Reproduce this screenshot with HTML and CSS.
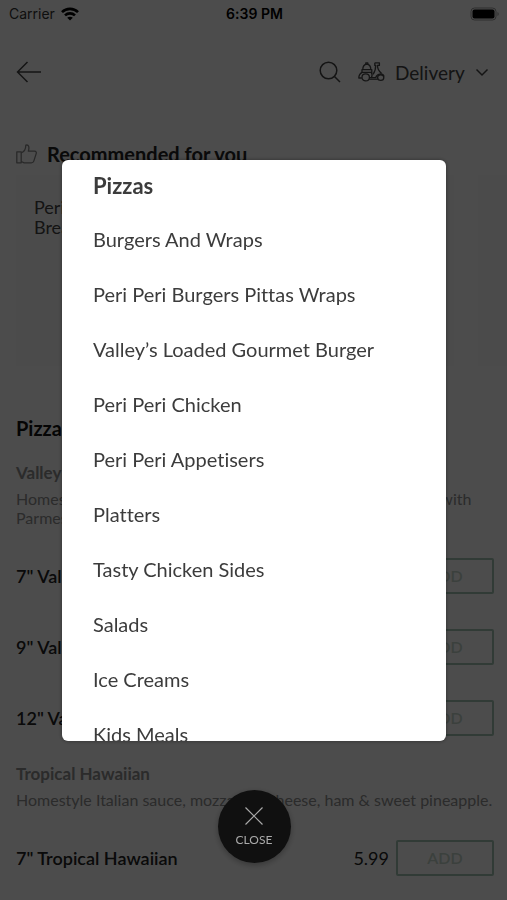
FILE: index.html
```html
<!DOCTYPE html>
<html lang="en">
  <head>
    <meta charset="UTF-8" />
    <meta name="viewport" content="width=device-width, initial-scale=1.0" />
    <title>Menu</title>
    <link rel="stylesheet" href="styles.css">
  </head>
  <body>
    <div class="status-bar">
      <div class="carrier">
        <span>Carrier</span>
        <svg width="18" height="14" viewBox="0 0 18 14" fill="none" stroke="#000" stroke-width="2.6">
          <path d="M1 5.2C5.4.7 12.6.7 17 5.2" />
          <path d="M4 8.4c2.8-2.7 7.2-2.7 10 0" />
          <path d="M9 13.6 6.2 10.7c1.5-1.4 4.1-1.4 5.6 0z" fill="#000" stroke="none" />
        </svg>
      </div>
      <span class="time">6:39 PM</span>
      <svg class="battery" width="30" height="14" viewBox="0 0 30 14">
        <rect x="1" y="1" width="25" height="12" rx="3.5" fill="none" stroke="#999" />
        <rect x="2.5" y="2.5" width="22" height="9" rx="2" />
        <path d="M27.5 5v4c1.6-.6 1.6-3.4 0-4z" fill="#999" />
      </svg>
    </div>

    <header class="header">
      <button class="icon-button" aria-label="Back">
        <svg width="26" height="22" viewBox="0 0 26 22" fill="none" stroke="#444" stroke-width="1.5">
          <path d="M25 11H1.5M11.5 1 1.5 11l10 10" />
        </svg>
      </button>
      <div class="header-actions">
        <button class="icon-button" aria-label="Search">
          <svg width="22" height="22" viewBox="0 0 22 22" fill="none" stroke="#444" stroke-width="1.5">
            <circle cx="9.5" cy="9.5" r="8.3" />
            <path d="m15.5 15.5 5.5 5.5" />
          </svg>
        </button>
        <label class="delivery">
          <svg width="27" height="20" viewBox="0 0 27 20" fill="none" stroke="#484848" stroke-width="1.3" stroke-linejoin="round">
            <path d="M4.8 7.6c0-3.2 1.4-5.2 4-5.6 2.6.4 4 2.4 4 5.6zM4 7.6h9.8v2.8H4z" />
            <path d="M7.8 2V.8h2V2" />
            <path d="M4.2 10.4C2 11.5.8 13.5.8 16h3M13.2 10.4c1.3 1.8 1 3.6.2 5.2h-2" />
            <path d="M4 15.4c0-4.6 7.4-4.6 7.4 0s-7.4 4.6-7.4 0z" />
            <path d="M16.8.8h4.6v2.6h-2c.2 3.6 1.5 6 4.2 8.2M16.8.8v2.6h.8c.2 3.6-.8 6.6-2.6 9" />
            <path d="M13.4 15.6h4.4c.6-3.6 7.4-5.4 8.2-1.2" />
            <path d="M19.6 15.6c0-3.8 6.2-3.8 6.2 0s-6.2 3.8-6.2 0z" />
            <path d="M11.2 17.2h8.6" />
          </svg>
          <select aria-label="Order type">
            <option>Delivery</option>
          </select>
          <svg width="14" height="9" viewBox="0 0 14 9" fill="none" stroke="#444" stroke-width="1.5">
            <path d="m1.5 1.5 5.5 5.5 5.5-5.5" />
          </svg>
        </label>
      </div>
    </header>

    <main class="menu">
      <h2 class="recommended-title">
        <svg width="21" height="20" viewBox="0 0 21 20" fill="none" stroke="#888" stroke-width="1.3" stroke-linejoin="round">
          <path d="M.8 7.8h4.4v11H.8z" />
          <path d="M5.2 8.8C8 7.8 9.8 5.5 9.8 1.2c2.8-1 3.9 1.8 2.5 6h6.2c1.6 0 2.2 1.3 1.6 2.7l-2.3 7.2c-.4 1.2-1.2 1.7-2.5 1.7H8.2L5.2 17.5" />
        </svg>
        Recommended for you
      </h2>
      <div class="cards">
        <div class="card">Peri Peri<br>Bread</div>
        <div class="card"></div>
      </div>

      <h2 class="section-title">Pizzas</h2>
      <section class="item">
        <h3>Valley's</h3>
        <p>Homestyle Italian sauce, mozzarella cheese &amp; bacon, topped with Parmesan.</p>
        <div class="size"><span>7" Valley's</span><span class="price">5.99</span><button class="add">ADD</button></div>
        <div class="size"><span>9" Valley's</span><span class="price">7.99</span><button class="add">ADD</button></div>
        <div class="size"><span>12" Valley's</span><span class="price">9.99</span><button class="add">ADD</button></div>
      </section>
      <section class="item">
        <h3>Tropical Hawaiian</h3>
        <p>Homestyle Italian sauce, mozzarella cheese, ham &amp; sweet pineapple.</p>
        <div class="size"><span>7" Tropical Hawaiian</span><span class="price">5.99</span><button class="add">ADD</button></div>
      </section>
    </main>

    <div class="overlay" id="overlay">
      <nav class="dialog">
        <a href="#" class="active">Pizzas</a>
        <a href="#">Burgers And Wraps</a>
        <a href="#">Peri Peri Burgers Pittas Wraps</a>
        <a href="#">Valley’s Loaded Gourmet Burger</a>
        <a href="#">Peri Peri Chicken</a>
        <a href="#">Peri Peri Appetisers</a>
        <a href="#">Platters</a>
        <a href="#">Tasty Chicken Sides</a>
        <a href="#">Salads</a>
        <a href="#">Ice Creams</a>
        <a href="#">Kids Meals</a>
      </nav>
      <button class="close" id="closeOverlay">
        <svg width="20" height="20" viewBox="0 0 20 20" fill="none" stroke="#aaa" stroke-width="1.2">
          <path d="m1.5 1.5 17 17m0-17-17 17" />
        </svg>
        CLOSE
      </button>
    </div>

    <script>
      document.getElementById("closeOverlay").addEventListener("click", () => {
        document.getElementById("overlay").classList.add("hidden");
      });
    </script>
  </body>
</html>
```
FILE: styles.css
```css
* {
  margin: 0;
  padding: 0;
  box-sizing: border-box;
}
body {
  font-family: Lato, sans-serif;
  font-variant-ligatures: none;
  background: #fff;
  color: #222;
  min-height: 100vh;
}
button {
  font-family: inherit;
  background: none;
  border: none;
  cursor: pointer;
}
svg {
  display: block;
  flex: none;
}
.status-bar {
  display: grid;
  grid-template-columns: 1fr auto 1fr;
  align-items: center;
  height: 27px;
  padding: 0 7px 0 9px;
  font-family: Inter, sans-serif;
  font-size: 14px;
  color: #333;
}
.carrier {
  display: flex;
  align-items: center;
  gap: 6px;
}
.time {
  font-weight: 600;
  color: #000;
}
.battery {
  justify-self: end;
}
.header {
  display: flex;
  align-items: center;
  justify-content: space-between;
  height: 90px;
  padding: 0 18px 0 16px;
}
.header-actions {
  display: flex;
  align-items: center;
  gap: 17px;
}
.delivery {
  display: flex;
  align-items: center;
  gap: 10px;
}
.delivery select {
  appearance: none;
  border: none;
  background: none;
  font-family: inherit;
  font-size: 19px;
  color: #444;
}
.menu {
  padding: 25px 13px 0 16px;
}
.recommended-title,
.section-title {
  display: flex;
  align-items: center;
  gap: 10px;
  font-size: 20px;
  line-height: 24px;
  font-weight: 700;
}
.recommended-title {
  margin-bottom: 9px;
}
.section-title {
  margin-bottom: 21px;
  color: #111;
}
.cards {
  display: grid;
  grid-template-columns: 1fr 16px;
  gap: 24px;
  margin-bottom: 50px;
}
.card {
  min-height: 191px;
  padding: 22px 18px;
  background: #fcfcfc;
  font-size: 18px;
  line-height: 20px;
  color: #444;
  overflow: hidden;
}
.item {
  margin-bottom: 9px;
}
.item h3 {
  margin-bottom: 4px;
  font-size: 17px;
  line-height: 24px;
  font-weight: 700;
  color: #909090;
}
.item p {
  margin-bottom: 13px;
  font-size: 16px;
  line-height: 19px;
  color: #909090;
}
.size {
  display: flex;
  align-items: center;
  gap: 7px;
  height: 71px;
  font-size: 18px;
  font-weight: 600;
}
.price {
  margin-left: auto;
  font-weight: 400;
}
.add {
  width: 98px;
  height: 36px;
  border: 2px solid #a4c6b4;
  border-radius: 2px;
  font-size: 16px;
  font-weight: 600;
  color: #c6d8cc;
}
.overlay {
  position: fixed;
  inset: 0;
  display: flex;
  flex-direction: column;
  align-items: center;
  gap: 49px;
  padding: 160px 61px 37px 62px;
  background: rgba(0, 0, 0, 0.7);
}
.overlay.hidden {
  display: none;
}
.dialog {
  flex: 1;
  min-height: 0;
  width: 100%;
  overflow: hidden;
  border-radius: 6px;
  background: #fff;
  box-shadow: 0 0 4px rgba(0, 0, 0, 0.4);
}
.dialog a {
  display: block;
  padding: 0 31px;
  font-size: 20px;
  line-height: 55px;
  color: #3c3c3c;
  text-decoration: none;
}
.dialog a.active {
  font-size: 22px;
  line-height: 52px;
  font-weight: 700;
}
.close {
  display: flex;
  flex-direction: column;
  align-items: center;
  justify-content: center;
  gap: 6px;
  width: 73px;
  height: 73px;
  border-radius: 50%;
  background: #101010;
  font-size: 12px;
  color: #aaa;
  box-shadow: 0 2px 6px rgba(0, 0, 0, 0.3);
}
```
